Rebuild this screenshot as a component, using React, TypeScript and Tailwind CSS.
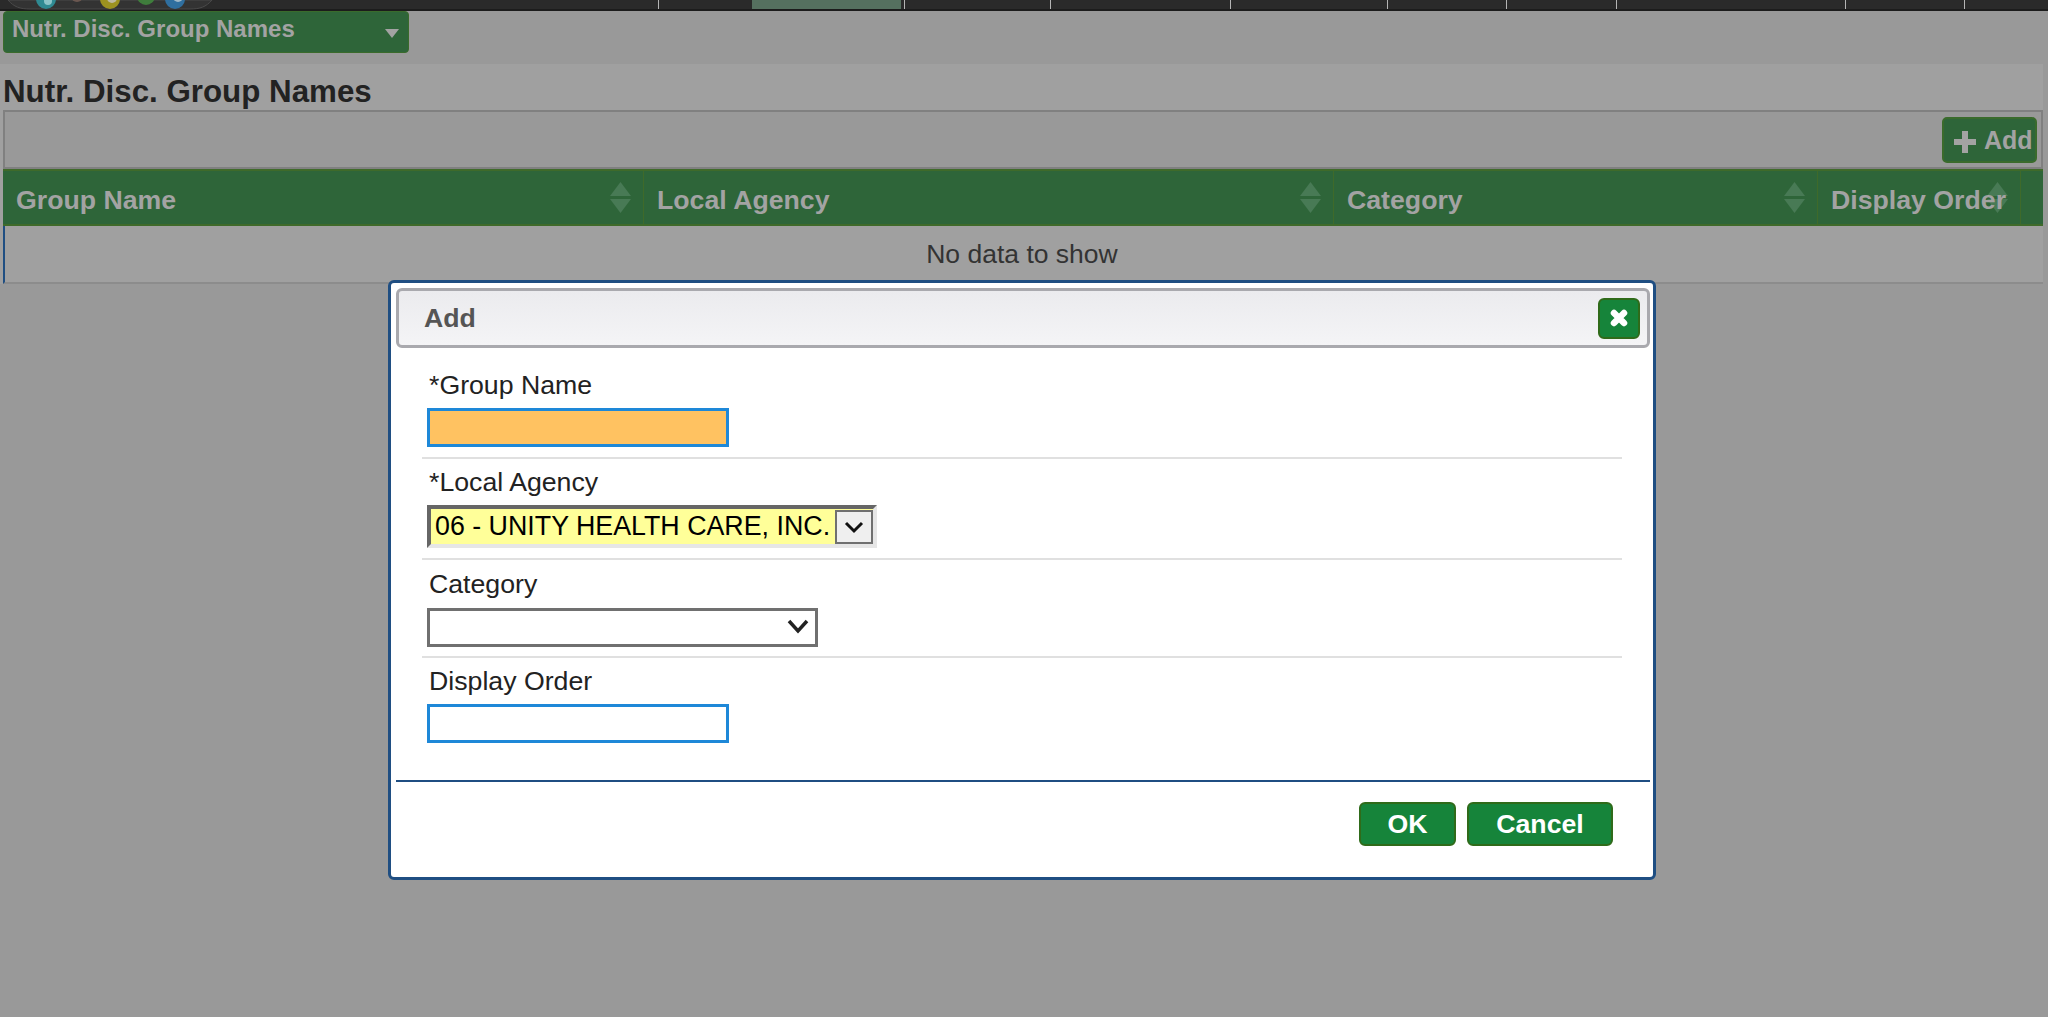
import React from 'react';

const navStops = [658, 904, 1050, 1230, 1387, 1506, 1616, 1845, 1964];

const columns = [
  { label: 'Group Name', width: 'w-[641px]' },
  { label: 'Local Agency', width: 'w-[690px]' },
  { label: 'Category', width: 'w-[484px]' },
  { label: 'Display Order', width: 'w-[203px]' },
];

const SortArrows = () => (
  <svg width="23" height="31" viewBox="0 0 23 31" className="absolute right-[11px] top-[11px]">
    <path d="M11.5 0 L22 14 H1 Z" fill="#487a55" />
    <path d="M1 17 H22 L11.5 31 Z" fill="#487a55" />
  </svg>
);

const Logo = () => (
  <svg width="220" height="10" viewBox="0 0 220 10" className="absolute left-0 top-0">
    <path d="M8 0 C14 7 20 9 30 9 H190 C200 9 206 7 212 0 Z" fill="#333" stroke="#4a4a4a" />
    <circle cx="46" cy="-1" r="10" fill="#2f8a92" />
    <circle cx="48" cy="1" r="4" fill="#8cc4c8" />
    <circle cx="77" cy="-4" r="6" fill="#6b5750" />
    <circle cx="110" cy="-1" r="10" fill="#9c9220" />
    <circle cx="112" cy="-2" r="5" fill="#bdb8a0" />
    <circle cx="146" cy="-4" r="9" fill="#3f7d3c" />
    <circle cx="175" cy="-1" r="10" fill="#2f6f9f" />
    <circle cx="178" cy="-3" r="5" fill="#9fb8c8" />
  </svg>
);

const FieldRow = ({ label, gap, last, children }: { label: string; gap: string; last?: boolean; children: React.ReactNode }) => (
  <div className={last ? 'h-[114px]' : 'border-b-2 border-[#e0e0e0]'}>
    <div className="pl-[7px] text-[26.7px] leading-[30px] text-[#222]">{label}</div>
    <div className={`pl-[5px] ${gap}`}>{children}</div>
  </div>
);

const GreenButton = ({ label, width }: { label: string; width: string }) => (
  <button
    className={`${width} h-[44px] rounded-[6px] border-2 border-[#2f6b1a] bg-[#16843a] text-[26.7px] leading-none font-bold text-white`}
  >
    {label}
  </button>
);

export default function App() {
  return (
    <div className="relative h-[1017px] w-[2048px] overflow-hidden bg-[#999] font-['Liberation_Sans',Arial,sans-serif]">
      {/* top nav, mostly cut off */}
      <div className="relative h-[11px] border-b-2 border-[#1c1c1c] bg-[#2a2a2a]">
        <Logo />
        <div className="absolute left-[752px] top-0 h-[9px] w-[149px] bg-[#55705f]" />
        {navStops.map(x => (
          <div key={x} className="absolute top-0 h-[9px] w-px bg-[#b5b5b5]" style={{ left: x }} />
        ))}
      </div>

      <div className="h-[53px] pl-[3px]">
        <div className="flex h-[42px] w-[406px] items-center justify-between rounded-[4px] border border-[#3a6b2c] bg-[#2e6539] pb-[6px] pl-[8px] pr-[9px]">
          <span className="text-[24px] font-bold leading-none text-[#a3a3a3]">Nutr. Disc. Group Names</span>
          <span className="mt-[9px] h-0 w-0 border-x-[7px] border-t-[9px] border-x-transparent border-t-[#a3a3a3]" />
        </div>
      </div>

      <div className="w-[2043px] bg-[#a0a0a0] pl-[3px]">
        <h1 className="h-[46px] pt-[5px] text-[31.3px] font-bold leading-[46px] text-[#222]">Nutr. Disc. Group Names</h1>

        <div className="flex h-[59px] justify-end border-x-2 border-y-2 border-[#808080] bg-[#999] pr-[4px] pt-[5px]">
          <button className="flex h-[46px] w-[95px] items-center gap-[7px] rounded-[5px] border-2 border-[#3a6b2c] bg-[#2e6539] pl-[9px] pt-[2px] text-[25px] font-bold text-[#a3a3a3]">
            <svg width="24" height="24" viewBox="0 0 24 24" className="mt-[2px]">
              <path d="M9 1 H15 V9 H23 V15 H15 V23 H9 V15 H1 V9 H9 Z" fill="#a3a3a3" />
            </svg>
            Add
          </button>
        </div>

        <div className="flex h-[57px] border-b-2 border-t-2 border-[#3f6a2a] bg-[#2e6539]">
          {columns.map(col => (
            <div
              key={col.label}
              className={`relative flex ${col.width} items-center border-r border-[#3f6a2a] pl-[13px] pt-[6px] text-[26.7px] font-bold text-[#a3a3a3]`}
            >
              <SortArrows />
              <span className="relative whitespace-nowrap">{col.label}</span>
            </div>
          ))}
          <div className="flex-1" />
        </div>

        <div className="flex h-[58px] items-center justify-center border-b-2 border-l-2 border-b-[#8c8c8c] border-l-[#1f4e82] pr-[4px] pt-[2px] text-[26.5px] text-[#333]">
          No data to show
        </div>
      </div>

      {/* Add dialog */}
      <div className="absolute left-[388px] top-[280px] flex h-[600px] w-[1268px] flex-col rounded-[6px] border-[3px] border-[#1f4e82] bg-white pt-[5px]">
        <div className="mx-[5px] flex h-[60px] w-[1254px] items-center justify-between rounded-[6px] border-[3px] border-[#a9a9ae] bg-gradient-to-b from-[#ebebee] to-[#f4f4f6] pl-[25px] pr-[7px]">
          <span className="text-[26.7px] font-bold text-[#555]">Add</span>
          <button className="flex h-[41px] w-[42px] items-center justify-center rounded-[6px] border-2 border-[#2f6b1a] bg-[#16843a]">
            <svg width="20" height="20" viewBox="0 0 20 20">
              <path d="M5 5 L15 15 M15 5 L5 15" stroke="#fff" strokeWidth="6.5" strokeLinecap="round" />
            </svg>
          </button>
        </div>

        <div className="mx-[31px] mt-[22px] w-[1200px]">
          <FieldRow label="*Group Name" gap="pt-[8px]">
            <input readOnly className="mb-[10px] block h-[39px] w-[302px] border-[3px] border-[#1e88d8] bg-[#ffc261]" />
          </FieldRow>
          <div className="pt-[8px]">
            <FieldRow label="*Local Agency" gap="pt-[8px]">
              <div className="mb-[10px] flex h-[43px] w-[450px] border-[4px] border-b-[#e6e6e6] border-l-[#666] border-r-[#e6e6e6] border-t-[#666] bg-[#ffff99]">
                <span className="flex-1 whitespace-nowrap pl-[4px] text-[26.8px] leading-[35px] text-black">
                  06 - UNITY HEALTH CARE, INC.
                </span>
                <span className="mt-px flex h-[34px] w-[38px] items-center justify-center border-[2px] border-[#707070] bg-[#efefef]">
                  <svg width="20" height="14" viewBox="0 0 20 14">
                    <path d="M2 3 L10 11 L18 3" fill="none" stroke="#111" strokeWidth="3" />
                  </svg>
                </span>
              </div>
            </FieldRow>
          </div>
          <div className="pt-[9px]">
            <FieldRow label="Category" gap="pt-[9px]">
              <div className="mb-[9px] flex h-[39px] w-[391px] items-center justify-end border-[3px] border-[#707070] pr-[6px]">
                <svg width="22" height="16" viewBox="0 0 22 16" className="mb-[4px]">
                  <path d="M2 3 L11 13 L20 3" fill="none" stroke="#222" strokeWidth="3.5" />
                </svg>
              </div>
            </FieldRow>
          </div>
          <div className="pt-[8px]">
            <FieldRow label="Display Order" gap="pt-[8px]" last>
              <input readOnly className="block h-[39px] w-[302px] border-[3px] border-[#1e88d8] bg-white" />
            </FieldRow>
          </div>
        </div>

        <div className="mx-[5px] w-[1254px] border-t-2 border-[#1f4e82] pr-[37px] pt-[20px]">
          <div className="flex justify-end gap-[11px]">
            <GreenButton label="OK" width="w-[97px]" />
            <GreenButton label="Cancel" width="w-[146px]" />
          </div>
        </div>
      </div>
    </div>
  );
}
